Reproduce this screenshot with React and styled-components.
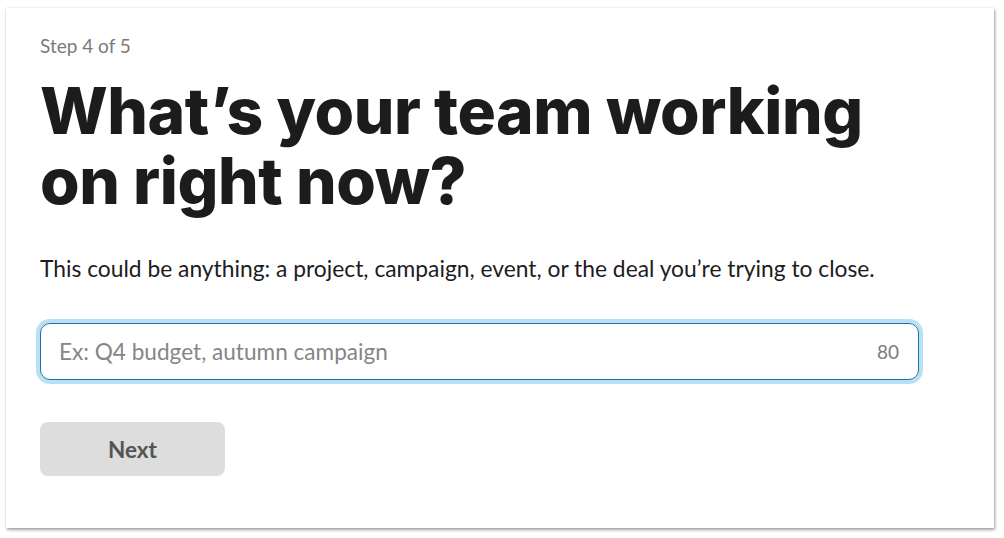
import styled, { createGlobalStyle } from "styled-components";

const GlobalStyle = createGlobalStyle`
  html, body {
    margin: 0;
    padding: 0;
    background: #ffffff;
  }
  * {
    box-sizing: border-box;
  }
`;

const Page = styled.div`
  width: 1004px;
  height: 538px;
  padding: 8px 10px 10px 6px;
  background: #ffffff;
`;

const Card = styled.section`
  width: 988px;
  height: 520px;
  background: #ffffff;
  box-shadow: 1px 2px 3px rgba(0, 0, 0, 0.35), 0 0 2px rgba(0, 0, 0, 0.12);
  padding: 26px 34px 0 34px;
  font-family: Lato, "Liberation Sans", sans-serif;
  display: flex;
  flex-direction: column;
  align-items: flex-start;
`;

const StepLabel = styled.div`
  font-size: 19px;
  color: #7a7a7a;
  line-height: 24px;
`;

const Title = styled.h1`
  margin: 18px 0 0 0;
  font-family: Inter, Lato, sans-serif;
  font-weight: 800;
  font-size: 64px;
  line-height: 70px;
  letter-spacing: -0.4px;
  color: #1d1c1d;
`;

const Subtitle = styled.p`
  margin: 38px 0 0 0;
  font-size: 22.8px;
  line-height: 28px;
  color: #1d1c1d;
`;

const InputWrap = styled.div`
  margin-top: 41px;
  width: 879px;
  height: 57px;
  border: 1px solid #1d6fae;
  border-radius: 10px;
  box-shadow: 0 0 0 4px rgba(29, 155, 209, 0.3);
  display: flex;
  align-items: center;
  padding: 0 19px 0 18px;
`;

const Input = styled.input`
  flex: 1;
  border: none;
  outline: none;
  background: transparent;
  font-family: Lato, "Liberation Sans", sans-serif;
  font-size: 22.6px;
  color: #1d1c1d;
  padding: 0;
  &::placeholder {
    color: #868686;
  }
`;

const Counter = styled.span`
  font-size: 19px;
  color: #7a7a7a;
`;

const NextButton = styled.button`
  margin-top: 42px;
  width: 185px;
  height: 54px;
  border: none;
  border-radius: 8px;
  background: #dddddd;
  color: #545454;
  font-family: Lato, "Liberation Sans", sans-serif;
  font-weight: 700;
  font-size: 22.5px;
  cursor: default;
`;

export default function App() {
  return (
    <>
      <GlobalStyle />
      <Page>
        <Card>
          <StepLabel>Step 4 of 5</StepLabel>
          <Title>
            What’s your team working
            <br />
            on right now?
          </Title>
          <Subtitle>
            This could be anything: a project, campaign, event, or the deal
            you’re trying to close.
          </Subtitle>
          <InputWrap>
            <Input placeholder="Ex: Q4 budget, autumn campaign" />
            <Counter>80</Counter>
          </InputWrap>
          <NextButton disabled>Next</NextButton>
        </Card>
      </Page>
    </>
  );
}
